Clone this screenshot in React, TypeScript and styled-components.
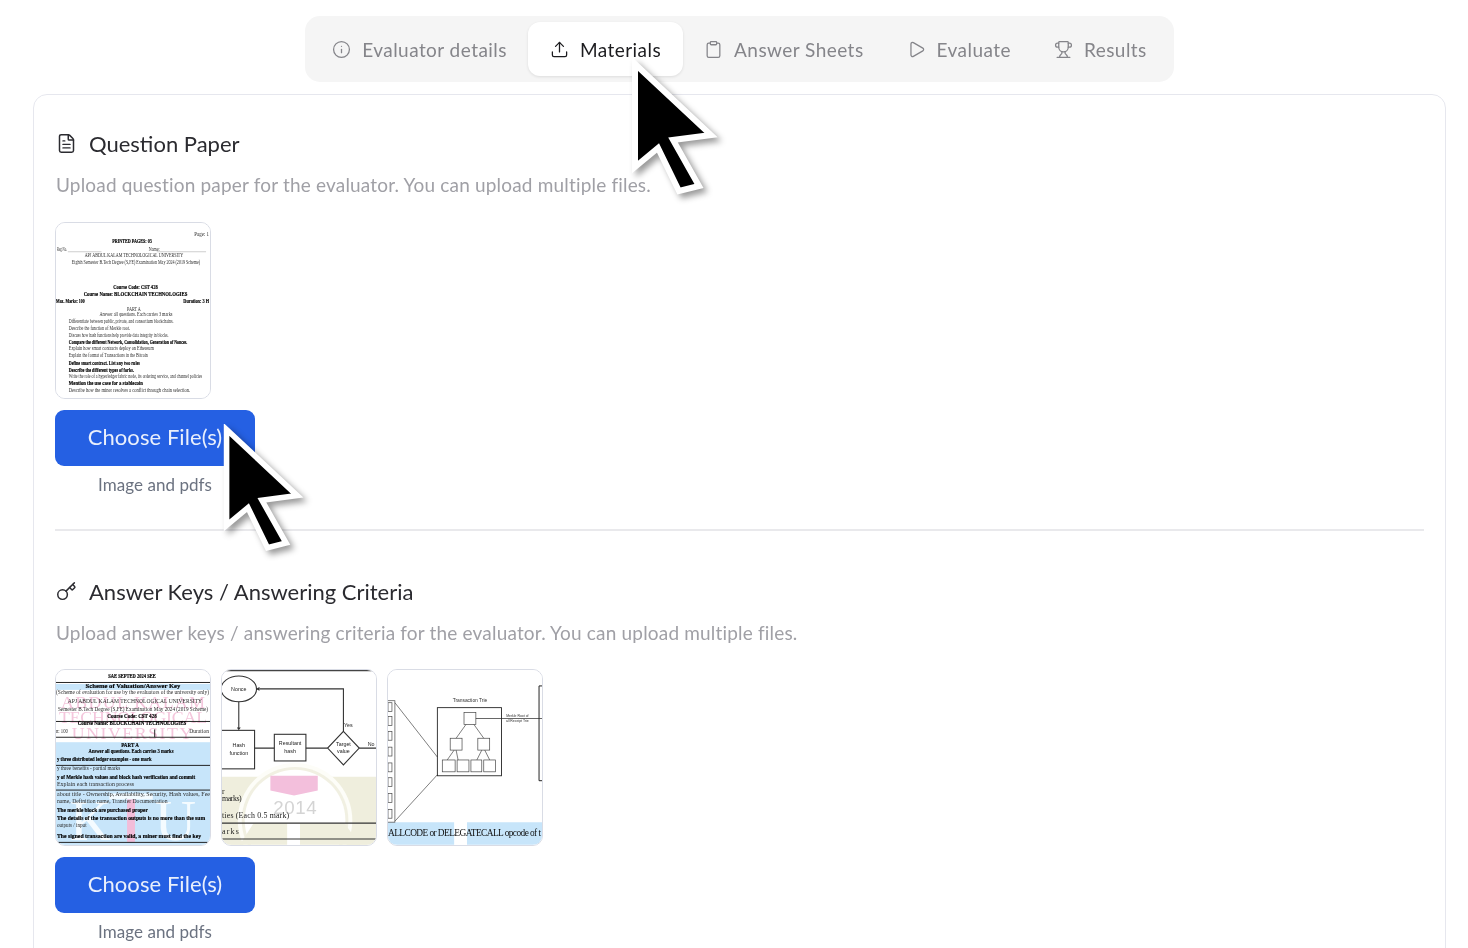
import styled, { createGlobalStyle } from 'styled-components';
import { Clipboard, FileText, Info, Key, Play, Trophy, Upload } from 'lucide-react';

const tabs = [
  { label: 'Evaluator details', Icon: Info },
  { label: 'Materials', Icon: Upload, active: true },
  { label: 'Answer Sheets', Icon: Clipboard },
  { label: 'Evaluate', Icon: Play },
  { label: 'Results', Icon: Trophy },
];

interface DocLine {
  x: number;
  y: number;
  w: number;
  t: string;
  b?: boolean;
}

const paperLines: DocLine[] = [
  { x: 140, y: 15, w: 15, t: 'Page: 1' },
  { x: 57, y: 22, w: 40, t: 'PRINTED PAGES: 03', b: true },
  { x: 1, y: 30, w: 10, t: 'Reg No.' },
  { x: 94, y: 30, w: 11, t: 'Name:' },
  { x: 29, y: 36, w: 100, t: 'APJ ABDUL KALAM TECHNOLOGICAL UNIVERSITY' },
  { x: 16, y: 43, w: 130, t: 'Eighth Semester B.Tech Degree (S,FE) Examination May 2024 (2019 Scheme)' },
  { x: 58, y: 69, w: 45, t: 'Course Code: CST 428', b: true },
  { x: 28, y: 76, w: 105, t: 'Course Name: BLOCKCHAIN TECHNOLOGIES', b: true },
  { x: 0, y: 83, w: 29, t: 'Max. Marks: 100', b: true },
  { x: 129, y: 83, w: 26, t: 'Duration: 3 H', b: true },
  { x: 72, y: 91, w: 14, t: 'PART A' },
  { x: 44, y: 96, w: 74, t: 'Answer all questions. Each carries 3 marks' },
  { x: 13, y: 103, w: 106, t: 'Differentiate between public, private, and consortium blockchains.' },
  { x: 13, y: 110, w: 62, t: 'Describe the function of Merkle root.' },
  { x: 13, y: 117, w: 101, t: 'Discuss how hash functions help provide data integrity in blocks.' },
  { x: 13, y: 124, w: 120, t: 'Compare the different Network, Consolidation, Generation of Nonces.', b: true },
  { x: 13, y: 131, w: 86, t: 'Explain how smart contracts deploy on Ethereum' },
  { x: 13, y: 138, w: 80, t: 'Explain the format of Transactions in the Bitcoin' },
  { x: 13, y: 146, w: 72, t: 'Define smart contract. List any two rules', b: true },
  { x: 13, y: 153, w: 66, t: 'Describe the different types of forks.', b: true },
  { x: 13, y: 159, w: 135, t: 'Write the role of a hyperledger fabric node, its ordering service, and channel policies' },
  { x: 13, y: 166, w: 75, t: 'Mention the use case for a stablecoin', b: true },
  { x: 13, y: 173, w: 123, t: 'Describe how the miner resolves a conflict through chain selection.' },
];

const keyLines: DocLine[] = [
  { x: 53, y: 10, w: 48, t: 'SAE SEPTED 2024 SEE', b: true },
  { x: 30, y: 20, w: 96, t: 'Scheme of Valuation/Answer Key', b: true },
  { x: 0, y: 26, w: 155, t: '(Scheme of evaluation for use by the evaluators of the university only)' },
  { x: 12, y: 35, w: 136, t: 'APJ ABDUL KALAM TECHNOLOGICAL UNIVERSITY' },
  { x: 2, y: 43, w: 152, t: 'Semester B.Tech Degree (S,FE) Examination May 2024 (2019 Scheme)' },
  { x: 52, y: 50, w: 50, t: 'Course Code: CST 428', b: true },
  { x: 22, y: 58, w: 110, t: 'Course Name: BLOCKCHAIN TECHNOLOGIES', b: true },
  { x: 0, y: 66, w: 12, t: 'n: 100' },
  { x: 135, y: 66, w: 20, t: 'Duration' },
  { x: 66, y: 80, w: 18, t: 'PART A', b: true },
  { x: 33, y: 86, w: 86, t: 'Answer all questions. Each carries 3 marks', b: true },
  { x: 1, y: 94, w: 96, t: 'y three distributed ledger examples - one mark', b: true },
  { x: 1, y: 103, w: 64, t: 'y three benefits - partial marks' },
  { x: 1, y: 112, w: 140, t: 'y of Merkle hash values and block hash verification and commit', b: true },
  { x: 1, y: 119, w: 78, t: 'Explain each transaction process' },
  { x: 1, y: 129, w: 155, t: 'about title - Ownership, Availability, Security, Hash values, Fee' },
  { x: 1, y: 137, w: 112, t: 'name, Definition name, Transfer Documentation' },
  { x: 1, y: 146, w: 92, t: 'The merkle block are purchased proper', b: true },
  { x: 1, y: 154, w: 150, t: 'The details of the transaction outputs is no more than the sum', b: true },
  { x: 1, y: 161, w: 30, t: 'outputs / input' },
  { x: 1, y: 172, w: 146, t: 'The signed transaction are valid, a miner must find the key', b: true },
];

const DocText = ({ lines }: { lines: DocLine[] }) => (
  <g fontFamily="'Liberation Serif', serif" fontSize="5.4" fill="#222" transform="translate(0 -2)">
    {lines.map((l) => (
      <text
        key={l.y + l.t}
        x={l.x}
        y={l.y}
        textLength={l.w}
        lengthAdjust="spacingAndGlyphs"
        fontWeight={l.b ? 700 : 400}
        fill={l.b ? '#000' : '#2a2a2a'}
        stroke={l.b ? '#000' : 'none'}
        strokeWidth=".15"
      >
        {l.t}
      </text>
    ))}
  </g>
);

const PaperThumb = () => (
  <svg width="154" height="175" viewBox="0 0 156 177">
    <rect width="156" height="177" fill="#fff" />
    <path d="M12 29H46M102 29H152" stroke="#999" strokeWidth=".5" />
    <DocText lines={paperLines} />
  </svg>
);

const KeyThumb = () => (
  <svg width="154" height="175" viewBox="0 0 156 177">
    <rect width="156" height="177" fill="#fff" />
    <rect y="14" width="156" height="6" fill="#c7e5fa" />
    <rect y="73" width="156" height="104" fill="#c7e5fa" />
    <g fontFamily="'Liberation Serif', serif" fontSize="18" fill="#f4c6dc">
      <text x="5" y="38" textLength="146">ABDUL KALAM</text>
      <text x="3" y="54" textLength="150">TECHNOLOGICAL</text>
      <text x="16" y="70" textLength="122">UNIVERSITY</text>
    </g>
    <g fontFamily="'Liberation Serif', serif" fontSize="58" fill="#f4fbff">
      <text x="14" y="172">K</text>
      <text x="100" y="172">U</text>
    </g>
    <path d="M54 125H98V131H54Z" fill="#f4fbff" />
    <rect x="72" y="131" width="8" height="43" fill="#f2bdd9" />
    <path
      d="M0 12.5H156M0 52H156M0 68H156M0 96.5H156M0 121.5H156M0 174.5H156"
      stroke="#222"
      strokeWidth="1"
    />
    <path d="M100 60V68" stroke="#222" strokeWidth="1" />
    <DocText lines={keyLines} />
  </svg>
);

const HashThumb = () => (
  <svg width="154" height="175" viewBox="0 0 156 177">
    <rect width="156" height="177" fill="#fff" />
    <rect y="108" width="156" height="69" fill="#efeedd" />
    <circle cx="74" cy="152" r="58" fill="#fdfdf8" />
    <circle cx="74" cy="152" r="54" fill="#f1f0e2" />
    <circle cx="74" cy="152" r="51" fill="#fff" />
    <path d="M18 177L32 155H66V177ZM79 177V155H124L140 177Z" fill="#efeedd" />
    <path d="M49 107H97V122L73 127L49 122Z" fill="#f3bfdc" />
    <text x="52" y="146" fontFamily="'Liberation Sans', sans-serif" fontSize="19" fill="#d4d4d4" textLength="44">
      2014
    </text>
    <path d="M0 .5H156" stroke="#444" strokeWidth="1.4" />
    <g fill="#fff" stroke="#333" strokeWidth="1.1">
      <ellipse cx="17" cy="19" rx="18" ry="13" />
      <rect x="-1" y="61" width="34" height="39" />
      <rect x="53" y="65" width="32" height="27" />
      <path d="M123 62L139 79L123 96L107 79Z" />
    </g>
    <path
      d="M123 62V19H38M17 32V59M33 79H53M85 79H107M139 79H156M0 155H156M0 171H156"
      fill="none"
      stroke="#333"
      strokeWidth="1.1"
    />
    <path d="M38 17V21L34 19ZM15 58H19L17 61Z" fill="#333" />
    <g fontFamily="'Liberation Sans', sans-serif" fontSize="5.4" fill="#222" textAnchor="middle">
      <text x="17" y="21">Nonce</text>
      <text x="17" y="78">Hash</text>
      <text x="17" y="86">function</text>
      <text x="69" y="76">Resultant</text>
      <text x="69" y="84">hash</text>
      <text x="123" y="77">Target</text>
      <text x="123" y="84">value</text>
      <text x="128" y="58">Yes</text>
      <text x="151" y="77">No</text>
    </g>
    <g fontFamily="'Liberation Serif', serif" fontSize="8" fill="#222">
      <text x="0" y="125">r</text>
      <text x="0" y="133" textLength="20">marks)</text>
      <text x="0" y="150" textLength="68">ties (Each 0.5 mark)</text>
      <text x="0" y="166" textLength="17">arks</text>
    </g>
  </svg>
);

const sideSlots = [33, 47, 62, 78, 94, 109, 125, 141];

const TrieThumb = () => (
  <svg width="154" height="175" viewBox="0 0 156 177">
    <rect width="156" height="177" fill="#fff" />
    <path d="M0 154H67V177H0ZM80 154H156V177H80Z" fill="#c7e5fa" />
    <g fill="none" stroke="#444" strokeWidth=".7">
      <rect x="-1" y="31" width="8" height="123" />
      {sideSlots.map((y) => (
        <rect key={y} x="0" y={y} width="4" height="9" />
      ))}
      <path d="M7 33L50 88M7 153L50 106M69 69L79 55M97 69L87 55M60 91L67 81M71 91L69 81M90 91L95 81M103 91L98 81" />
      <rect x="50" y="38" width="65" height="69" stroke="#222" strokeWidth=".9" />
      <rect x="77" y="43" width="12" height="12" />
      <rect x="63" y="69" width="12" height="12" />
      <rect x="91" y="69" width="12" height="12" />
      <rect x="55" y="91" width="13" height="12" />
      <rect x="70" y="91" width="12" height="12" />
      <rect x="84" y="91" width="11" height="12" />
      <rect x="97" y="91" width="12" height="12" />
      <path d="M89 49H156" stroke="#222" />
      <path d="M156 16H153V112H156" stroke="#222" strokeWidth="1" />
    </g>
    <g fontFamily="'Liberation Sans', sans-serif" fontSize="5" fill="#333" textAnchor="middle">
      <text x="83" y="32" textLength="35">Transaction Trie</text>
      <text x="131" y="47" fontSize="3.5">Merkle Root of</text>
      <text x="131" y="53" fontSize="3.5">all Receipt Trie</text>
    </g>
    <text x="0" y="168" fontFamily="'Liberation Serif', serif" fontSize="9.5" fill="#111" textLength="155">
      ALLCODE or DELEGATECALL opcode of t
    </text>
  </svg>
);

const Cursor = ({ x, y, scale = 1 }: { x: number; y: number; scale?: number }) => (
  <CursorArt $x={x} $y={y} width={94 * scale} height={142 * scale} viewBox="0 0 94 142">
    <path d="M6 6L82 77L44 82L70 128L50 133L29 90L6 109Z" fill="#000" stroke="#fff" strokeWidth="6" strokeLinejoin="miter" />
  </CursorArt>
);

export default function App() {
  return (
    <Page>
      <GlobalStyle />
      <TabBar>
        {tabs.map(({ label, Icon, active }) => (
          <Tab key={label} $active={active}>
            <Icon size={19} strokeWidth={1.6} />
            <span>{label}</span>
          </Tab>
        ))}
      </TabBar>
      <Card>
        <Section>
          <SectionTitle>
            <FileText size={21} strokeWidth={1.7} />
            <h2>Question Paper</h2>
          </SectionTitle>
          <SectionHint>Upload question paper for the evaluator. You can upload multiple files.</SectionHint>
          <ThumbRow $top={25}>
            <Thumb><PaperThumb /></Thumb>
          </ThumbRow>
          <UploadBox>
            <ChooseButton type="button">Choose File(s)</ChooseButton>
            <UploadCaption>Image and pdfs</UploadCaption>
          </UploadBox>
        </Section>
        <Divider />
        <Section>
          <SectionTitle>
            <Key size={21} strokeWidth={1.7} />
            <h2>Answer Keys / Answering Criteria</h2>
          </SectionTitle>
          <SectionHint>Upload answer keys / answering criteria for the evaluator. You can upload multiple files.</SectionHint>
          <ThumbRow $top={24}>
            <Thumb><KeyThumb /></Thumb>
            <Thumb><HashThumb /></Thumb>
            <Thumb><TrieThumb /></Thumb>
          </ThumbRow>
          <UploadBox>
            <ChooseButton type="button">Choose File(s)</ChooseButton>
            <UploadCaption>Image and pdfs</UploadCaption>
          </UploadBox>
        </Section>
      </Card>
      <Cursor x={629} y={58} />
      <Cursor x={221} y={424} scale={0.93} />
    </Page>
  );
}

const GlobalStyle = createGlobalStyle`
  html, body {
    margin: 0;
    background: #fff;
    overflow: hidden;
  }
  * {
    box-sizing: border-box;
  }
`;

const Page = styled.div`
  position: relative;
  width: 1468px;
  height: 948px;
  overflow: hidden;
  padding: 16px 22px 0 33px;
  font-family: Lato, 'Noto Sans', sans-serif;
  filter: blur(0.3px);
`;

const TabBar = styled.div`
  display: flex;
  width: fit-content;
  height: 66px;
  margin: 0 auto;
  padding: 6px;
  background: #f5f5f5;
  border-radius: 15px;
`;

const Tab = styled.div<{ $active?: boolean }>`
  display: flex;
  align-items: center;
  gap: 11px;
  padding: 0 21.5px;
  border-radius: 12px;
  font-size: 19px;
  letter-spacing: 0.45px;
  color: ${({ $active }) => ($active ? '#1c1c1f' : '#85858a')};
  background: ${({ $active }) => ($active ? '#fff' : 'transparent')};
  box-shadow: ${({ $active }) => ($active ? '0 1px 3px rgba(0, 0, 0, 0.1)' : 'none')};
`;

const Card = styled.div`
  height: 900px;
  margin-top: 12px;
  padding: 0 21px;
  border: 1px solid #e6e7ee;
  border-radius: 14px;
`;

const Section = styled.section`
  display: flex;
  flex-direction: column;
  align-items: flex-start;
`;

const SectionTitle = styled.div`
  display: flex;
  align-items: center;
  gap: 12px;
  height: 30px;
  margin-top: 33px;
  padding-left: 1px;
  color: #2b2b30;

  h2 {
    margin: 0;
    font-size: 22px;
    font-weight: 400;
  }
`;

const SectionHint = styled.p`
  margin: 15px 0 0 1px;
  height: 24px;
  font-size: 19px;
  line-height: 24px;
  letter-spacing: 0.18px;
  color: #a0a0a6;
`;

const ThumbRow = styled.div<{ $top: number }>`
  display: flex;
  gap: 10px;
  margin-top: ${({ $top }) => $top}px;
`;

const Thumb = styled.div`
  width: 156px;
  height: 177px;
  border: 1px solid #d9dce5;
  border-radius: 10px;
  overflow: hidden;
  background: #fff;

  svg {
    display: block;
    filter: blur(0.6px);
  }
`;

const UploadBox = styled.div`
  display: flex;
  flex-direction: column;
  align-items: center;
  width: 200px;
  margin-top: 11px;
`;

const ChooseButton = styled.button`
  width: 200px;
  height: 56px;
  padding: 0 0 3px;
  border: none;
  border-radius: 9px;
  background: #2560e3;
  color: #e9effc;
  font-family: inherit;
  font-size: 22px;
  letter-spacing: 0.07px;
`;

const UploadCaption = styled.span`
  margin-top: 8px;
  height: 22px;
  font-size: 17px;
  line-height: 22px;
  letter-spacing: 0.05px;
  color: #6b7280;
`;

const Divider = styled.hr`
  width: 100%;
  height: 2px;
  margin: 33px 0 12px;
  border: none;
  background: #e9e9ec;
`;

const CursorArt = styled.svg<{ $x: number; $y: number }>`
  position: absolute;
  left: ${({ $x }) => $x}px;
  top: ${({ $y }) => $y}px;
  filter: drop-shadow(4px 4px 3px rgba(0, 0, 0, 0.4));
`;
